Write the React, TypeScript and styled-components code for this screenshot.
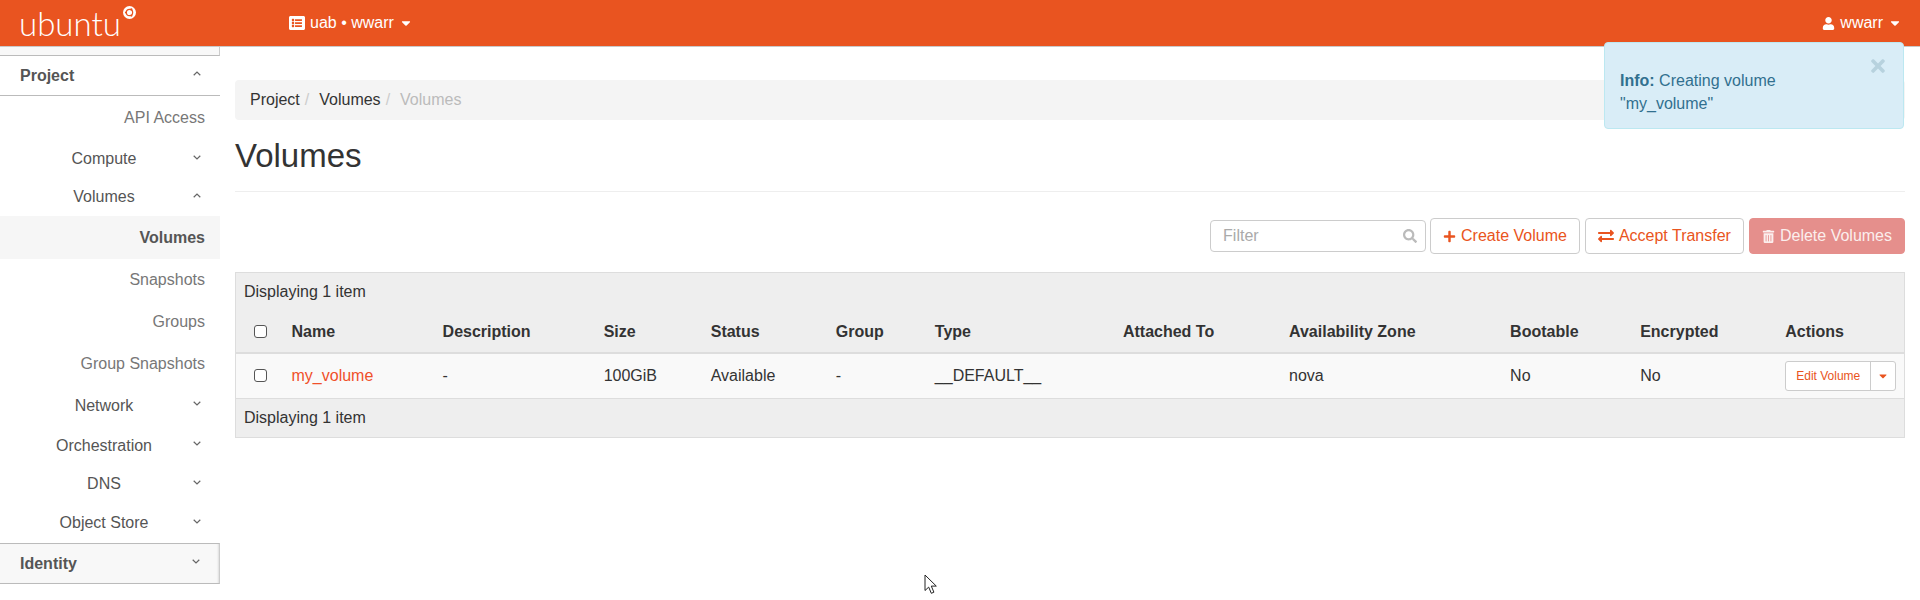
import styled, { createGlobalStyle } from 'styled-components';
import {
  FaCaretDown,
  FaExchangeAlt,
  FaListAlt,
  FaPlus,
  FaSearch,
  FaTimes,
  FaTrashAlt,
  FaUser,
} from 'react-icons/fa';

const COLUMNS = [
  { label: 'Name', width: 151 },
  { label: 'Description', width: 161 },
  { label: 'Size', width: 107 },
  { label: 'Status', width: 125 },
  { label: 'Group', width: 99 },
  { label: 'Type', width: 188 },
  { label: 'Attached To', width: 166 },
  { label: 'Availability Zone', width: 221 },
  { label: 'Bootable', width: 130 },
  { label: 'Encrypted', width: 145 },
  { label: 'Actions', width: 127 },
];

const VOLUME_ROW = ['-', '100GiB', 'Available', '-', '__DEFAULT__', '', 'nova', 'No', 'No'];

const Chevron = ({ up }: { up?: boolean }) => (
  <ChevronIcon viewBox="0 0 8 5">
    <path d={up ? 'M0.7 4.2 4 1 7.3 4.2' : 'M0.7 0.8 4 4 7.3 0.8'} />
  </ChevronIcon>
);

const UbuntuMark = () => (
  <LogoMark viewBox="0 0 14 14">
    <circle cx="7" cy="7" r="7" fill="#fff" />
    <circle cx="7" cy="7" r="3.4" fill="none" stroke="#e95420" strokeWidth="1.3" />
    <circle cx="3.2" cy="7" r="1.2" fill="#e95420" />
    <circle cx="9" cy="3.7" r="1.2" fill="#e95420" />
    <circle cx="9" cy="10.3" r="1.2" fill="#e95420" />
  </LogoMark>
);

const App = () => (
  <>
    <GlobalStyle />
    <Navbar>
      <Brand>
        <BrandName>ubuntu</BrandName>
        <UbuntuMark />
      </Brand>
      <NavMenu>
        <FaListAlt size={16} />
        <span>uab • wwarr</span>
        <FaCaretDown size={14} />
      </NavMenu>
      <UserMenu>
        <FaUser size={13} />
        <span>wwarr</span>
        <FaCaretDown size={14} />
      </UserMenu>
    </Navbar>

    <Toast>
      <CloseIcon>
        <FaTimes size={20} />
      </CloseIcon>
      <strong>Info:</strong> Creating volume
      <br />
      "my_volume"
    </Toast>

    <Body>
      <Sidebar>
        <SidebarStub />
        <SectionRow>
          <SectionLabel>Project</SectionLabel>
          <Chevron up />
        </SectionRow>
        <LeafRow $height={44}>API Access</LeafRow>
        <GroupRow $height={38}>
          <GroupLabel>Compute</GroupLabel>
          <Chevron />
        </GroupRow>
        <GroupRow $height={38}>
          <GroupLabel>Volumes</GroupLabel>
          <Chevron up />
        </GroupRow>
        <LeafRow $height={43} $active>
          Volumes
        </LeafRow>
        <LeafRow $height={42}>Snapshots</LeafRow>
        <LeafRow $height={42}>Groups</LeafRow>
        <LeafRow $height={42}>Group Snapshots</LeafRow>
        <GroupRow $height={41}>
          <GroupLabel>Network</GroupLabel>
          <Chevron />
        </GroupRow>
        <GroupRow $height={39}>
          <GroupLabel>Orchestration</GroupLabel>
          <Chevron />
        </GroupRow>
        <GroupRow $height={38}>
          <GroupLabel>DNS</GroupLabel>
          <Chevron />
        </GroupRow>
        <GroupRow $height={40}>
          <GroupLabel>Object Store</GroupLabel>
          <Chevron />
        </GroupRow>
        <ClosedSection>
          <SectionLabel>Identity</SectionLabel>
          <Chevron />
        </ClosedSection>
      </Sidebar>

      <Main>
        <Breadcrumb>
          <Crumb>Project</Crumb>
          <Slash>/</Slash>
          <Crumb>Volumes</Crumb>
          <Slash>/</Slash>
          <Crumb $current>Volumes</Crumb>
        </Breadcrumb>
        <PageTitle>Volumes</PageTitle>
        <Toolbar>
          <FilterBox>
            <FilterInput placeholder="Filter" />
            <FaSearch size={14} />
          </FilterBox>
          <ToolButton>
            <FaPlus size={13} />
            Create Volume
          </ToolButton>
          <ToolButton>
            <FaExchangeAlt size={16} />
            Accept Transfer
          </ToolButton>
          <DangerButton>
            <FaTrashAlt size={13} />
            Delete Volumes
          </DangerButton>
        </Toolbar>

        <Table>
          <colgroup>
            <col width={48} />
            {COLUMNS.map((column) => (
              <col key={column.label} width={column.width} />
            ))}
          </colgroup>
          <thead>
            <tr>
              <CountCell colSpan={12}>Displaying 1 item</CountCell>
            </tr>
            <tr>
              <HeadCell>
                <Checkbox />
              </HeadCell>
              {COLUMNS.map((column) => (
                <HeadCell key={column.label}>{column.label}</HeadCell>
              ))}
            </tr>
          </thead>
          <tbody>
            <tr>
              <DataCell>
                <Checkbox />
              </DataCell>
              <DataCell>
                <VolumeLink>my_volume</VolumeLink>
              </DataCell>
              {VOLUME_ROW.map((value, index) => (
                <DataCell key={index}>{value}</DataCell>
              ))}
              <DataCell>
                <SplitButton>
                  <EditButton>Edit Volume</EditButton>
                  <CaretButton>
                    <FaCaretDown size={12} />
                  </CaretButton>
                </SplitButton>
              </DataCell>
            </tr>
          </tbody>
          <tfoot>
            <tr>
              <CountCell colSpan={12}>Displaying 1 item</CountCell>
            </tr>
          </tfoot>
        </Table>
      </Main>
    </Body>

    <Pointer viewBox="0 0 14 21">
      <path d="M1 1v15.5l3.7-3.4 2.6 6.2 2.6-1.1-2.6-6.1h5z" />
    </Pointer>
  </>
);

const GlobalStyle = createGlobalStyle`
  html, body {
    margin: 0;
    height: 600px;
    overflow: hidden;
    background: #fff;
  }

  body {
    font-family: 'Liberation Sans', Arial, sans-serif;
    font-size: 16px;
    color: #333;
  }

  * {
    box-sizing: border-box;
  }
`;

const Navbar = styled.header`
  display: flex;
  align-items: center;
  height: 47px;
  padding-right: 18px;
  background: #e95420;
  border-bottom: 1px solid #c9c9c9;
  color: #fff;
`;

const Brand = styled.div`
  display: flex;
  align-items: flex-start;
  width: 289px;
  padding-left: 19px;
`;

const BrandName = styled.span`
  font-family: Lato, 'Open Sans', sans-serif;
  font-size: 33px;
  font-weight: 300;
  line-height: 40px;
`;

const LogoMark = styled.svg`
  width: 13px;
  height: 13px;
  margin: 3px 0 0 2px;
`;

const NavMenu = styled.div`
  display: flex;
  align-items: center;
  gap: 5px;
  flex: 1;
`;

const UserMenu = styled.div`
  display: flex;
  align-items: center;
  gap: 5px;
`;

const Toast = styled.div`
  position: absolute;
  top: 42px;
  right: 16px;
  width: 300px;
  height: 87px;
  padding: 26px 15px 0;
  background: #d9edf7;
  border: 1px solid #bce8f1;
  border-radius: 4px;
  color: #31708f;
  line-height: 23px;
`;

const CloseIcon = styled.span`
  position: absolute;
  top: 13px;
  right: 15px;
  color: #b7d2de;
  line-height: 0;
`;

const Body = styled.div`
  display: flex;
`;

const Sidebar = styled.nav`
  flex: none;
  width: 220px;
  color: #555;
`;

const SidebarStub = styled.div`
  height: 9px;
  background: #f8f8f8;
  border-right: 1px solid #ccc;
  border-bottom: 1px solid #bbb;
`;

const SectionRow = styled.div`
  display: flex;
  align-items: center;
  justify-content: space-between;
  height: 40px;
  padding: 0 19px 0 20px;
  border-bottom: 1px solid #bbb;
`;

const ClosedSection = styled(SectionRow)`
  height: 41px;
  background: #f8f8f8;
  border-top: 1px solid #bbb;
  border-right: 1px solid #ccc;
  box-shadow: inset -2px 0 2px -1px #ddd;
`;

const SectionLabel = styled.span`
  font-weight: 700;
`;

const LeafRow = styled.div<{ $height: number; $active?: boolean }>`
  display: flex;
  align-items: center;
  justify-content: flex-end;
  height: ${({ $height }) => $height}px;
  padding-right: 15px;
  background: ${({ $active }) => ($active ? '#f6f6f6' : 'transparent')};
  color: ${({ $active }) => ($active ? '#555' : '#777')};
  font-weight: ${({ $active }) => ($active ? 700 : 400)};
`;

const GroupRow = styled.div<{ $height: number }>`
  display: flex;
  align-items: center;
  height: ${({ $height }) => $height}px;
  padding: 0 19px 0 15px;
`;

const GroupLabel = styled.span`
  flex: 1;
  text-align: center;
`;

const ChevronIcon = styled.svg`
  flex: none;
  width: 8px;
  height: 5px;
  margin-bottom: 4px;
  fill: none;
  stroke: #666;
  stroke-width: 1.2;
`;

const Main = styled.main`
  flex: 1;
  min-width: 0;
  padding: 33px 15px 0;
`;

const Breadcrumb = styled.div`
  display: flex;
  align-items: center;
  height: 40px;
  padding-left: 15px;
  background: #f4f4f4;
  border-radius: 4px;
`;

const Crumb = styled.span<{ $current?: boolean }>`
  color: ${({ $current }) => ($current ? '#bbb' : '#333')};
`;

const Slash = styled.span`
  padding: 0 10px 0 5px;
  color: #ccc;
`;

const PageTitle = styled.h1`
  margin: 15px 0 0;
  height: 57px;
  padding-bottom: 0;
  border-bottom: 1px solid #eee;
  font-size: 33px;
  font-weight: 400;
  line-height: 42px;
`;

const Toolbar = styled.div`
  display: flex;
  align-items: center;
  justify-content: flex-end;
  gap: 5px;
  margin-top: 26px;
  height: 36px;
`;

const FilterBox = styled.div`
  display: flex;
  align-items: center;
  width: 216px;
  height: 32px;
  margin-right: -1px;
  padding: 0 8px 0 12px;
  border: 1px solid #ccc;
  border-radius: 4px;
  color: #bbb;
`;

const FilterInput = styled.input`
  flex: 1;
  min-width: 0;
  padding: 0;
  border: 0;
  outline: 0;
  font: inherit;

  &::placeholder {
    color: #aaa;
  }
`;

const ToolButton = styled.button`
  display: flex;
  align-items: center;
  gap: 5px;
  height: 36px;
  padding: 0 12px;
  background: #fff;
  border: 1px solid #ccc;
  border-radius: 4px;
  color: #e95420;
  font: inherit;
`;

const DangerButton = styled(ToolButton)`
  background: #e58f8c;
  border-color: #e58f8c;
  color: #fbeeed;
`;

const Table = styled.table`
  width: 1670px;
  margin-top: 18px;
  table-layout: fixed;
  border-collapse: collapse;
  border: 1px solid #ddd;
  line-height: 20px;
`;

const CountCell = styled.td`
  height: 39px;
  padding: 0 8px;
  background: #eee;
`;

const HeadCell = styled.th`
  height: 41px;
  padding: 0 8px;
  background: #eee;
  border-bottom: 2px solid #ddd;
  font-weight: 700;
  text-align: left;
  color: #333;

  &:first-child {
    padding-left: 18px;
  }
`;

const DataCell = styled.td`
  height: 46px;
  padding: 0 8px;
  background: #f9f9f9;
  border-bottom: 1px solid #ddd;

  &:first-child {
    padding-left: 18px;
  }
`;

const Checkbox = styled.span`
  display: block;
  width: 13px;
  height: 13px;
  background: #fff;
  border: 1px solid #555;
  border-radius: 3px;
`;

const VolumeLink = styled.a`
  color: #f0502a;
`;

const SplitButton = styled.div`
  display: flex;
  width: 111px;
  height: 30px;
  background: #fff;
  border: 1px solid #ccc;
  border-radius: 3px;
  color: #e95420;
`;

const EditButton = styled.span`
  flex: 1;
  font-size: 12px;
  line-height: 28px;
  text-align: center;
  border-right: 1px solid #ccc;
`;

const CaretButton = styled.span`
  display: flex;
  align-items: center;
  justify-content: center;
  width: 24px;
`;

const Pointer = styled.svg`
  position: absolute;
  left: 924px;
  top: 574px;
  width: 14px;
  height: 21px;
  fill: #fff;
  stroke: #222;
  stroke-width: 1;
`;

export default App;
